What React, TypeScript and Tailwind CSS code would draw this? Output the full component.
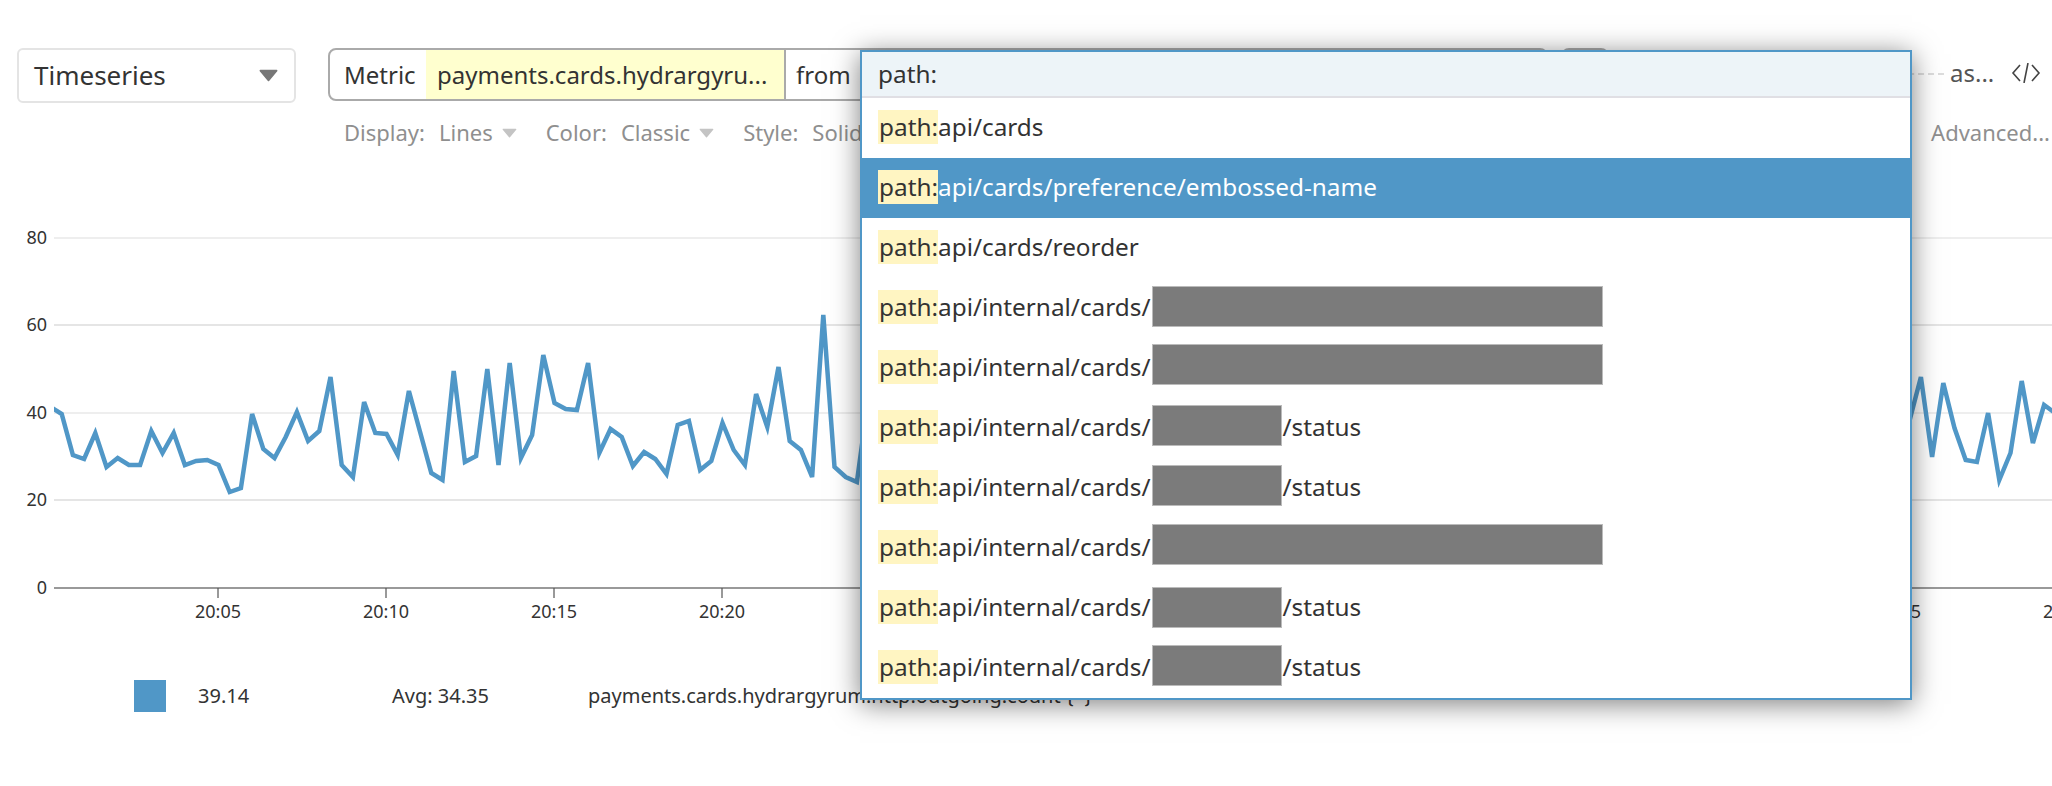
const X0 = 50.5;
const STEP = 11.2;

// y positions read off the reference, left part of the series
const leftSeries = [
  407, 414, 455, 459, 433, 467, 458, 465, 465, 431, 453, 433, 465, 461, 460, 465, 492, 488, 414, 449, 458, 437, 412,
  441, 431, 377, 465, 477, 402, 433, 434, 455, 391, 432, 473, 480, 371, 462, 456, 369, 465, 363, 458, 435, 355, 403,
  409, 410, 363, 453, 429, 437, 466, 452, 459, 474, 425, 421, 470, 461, 423, 450, 465, 394, 427, 367, 441, 450, 477,
  315, 467, 477, 482, 400,
];
const rightSeries = [420, 377, 457, 383, 428, 460, 462, 413, 480, 453, 381, 443, 405, 413];

const points = [
  ...leftSeries.map((y, i) => `${X0 + i * STEP},${y}`),
  ...rightSeries.map((y, i) => `${X0 + (166 + i) * STEP},${y}`),
].join(" ");

const yTicks = [
  { label: "80", y: 238, light: true },
  { label: "60", y: 325, light: false },
  { label: "40", y: 413, light: true },
  { label: "20", y: 500, light: false },
];
const xTicks = ["20:05", "20:10", "20:15", "20:20", "20:25", "20:30", "20:35", "20:40", "20:45", "20:50", "20:55", "21:00"];

const rows = [
  { text: "api/cards" },
  { text: "api/cards/preference/embossed-name", active: true },
  { text: "api/cards/reorder" },
  { text: "api/internal/cards/", hidden: 451, lift: 1 },
  { text: "api/internal/cards/", hidden: 451, lift: 5 },
  { text: "api/internal/cards/", hidden: 130, lift: 3, tail: "/status" },
  { text: "api/internal/cards/", hidden: 130, lift: 3, tail: "/status" },
  { text: "api/internal/cards/", hidden: 451, lift: 5 },
  { text: "api/internal/cards/", hidden: 130, lift: -1, tail: "/status" },
  { text: "api/internal/cards/", hidden: 130, lift: 3, tail: "/status" },
];

function Caret({ className }: { className: string }) {
  return (
    <svg viewBox="0 0 12 8" className={className} fill="currentColor" stroke="currentColor" strokeWidth="1" strokeLinejoin="round">
      <path d="M1 1h10L6 7z" />
    </svg>
  );
}

function Option({ label, value }: { label: string; value: string }) {
  return (
    <div className="flex items-center">
      <span>{label}</span>
      <span className="ml-[14px]">{value}</span>
      <Caret className="ml-[9px] w-[15px] h-[10px] text-[#c4c4c4]" />
    </div>
  );
}

function Chart() {
  return (
    <svg className="block w-[2052px] h-[420px]" viewBox="0 220 2052 420">
      <defs>
        <clipPath id="plot">
          <rect x="54" y="220" width="2000" height="368" />
        </clipPath>
      </defs>
      {yTicks.map((t) => (
        <g key={t.label}>
          <line x1="54" x2="2052" y1={t.y} y2={t.y} stroke={t.light ? "#eeeeee" : "#dddddd"} strokeWidth={t.light ? 2 : 1.5} />
          <text x="47" y={t.y + 6} textAnchor="end" fontSize="18" fill="#333">
            {t.label}
          </text>
        </g>
      ))}
      <text x="47" y="594" textAnchor="end" fontSize="18" fill="#333">
        0
      </text>
      <line x1="54" x2="2052" y1="588" y2="588" stroke="#777" strokeWidth="1.5" />
      {xTicks.map((label, i) => (
        <g key={label}>
          <line x1={218 + i * 168} x2={218 + i * 168} y1="588" y2="598" stroke="#555" strokeWidth="1.2" />
          <text x={218 + i * 168} y="618" textAnchor="middle" fontSize="18" fill="#333">
            {label}
          </text>
        </g>
      ))}
      <polyline points={points} fill="none" stroke="#5097c7" strokeWidth="4.5" strokeLinejoin="miter" clipPath="url(#plot)" />
    </svg>
  );
}

function Dropdown() {
  return (
    <div className="absolute left-[860px] top-[50px] w-[1052px] border-2 border-[#5097c7] bg-white text-[24.35px] text-[#333] shadow-[0_4px_26px_rgba(0,0,0,0.5)]">
      <div className="h-[46px] pl-[16px] pt-[1px] flex items-center bg-[#edf4f8] border-b-2 border-[#e0dfe4]">path:</div>
      {rows.map((r, i) => (
        <div key={i} className={`h-[60px] pl-[16px] pb-[2px] flex items-center ${r.active ? "bg-[#5097c7] text-white" : ""}`}>
          <span className="w-[60px] h-[34px] leading-[34px] pl-[1px] bg-[#fff5c2] text-[#333]">path:</span>
          <span>{r.text}</span>
          {r.hidden && (
            <span
              className="h-[41px] ml-[1px] bg-[#7b7b7b] border border-[#bbbbbb]"
              style={{ width: r.hidden, marginTop: -(r.lift ?? 0) }}
            />
          )}
          {r.tail && <span className="ml-[1px]">{r.tail}</span>}
        </div>
      ))}
    </div>
  );
}

export default function App() {
  return (
    <div className="relative w-[2052px] h-[786px] overflow-hidden bg-white font-['Noto_Sans',sans-serif] text-[#333]">
      <div className="flex items-start pt-[48px] pl-[17px]">
        <div className="w-[279px] h-[55px] px-[15px] flex items-center justify-between border-2 border-[#e4e4e4] rounded-[6px] text-[26px]">
          <span>Timeseries</span>
          <Caret className="w-[21px] h-[13px] text-[#777]" />
        </div>
        <div className="ml-[32px] w-[1220px] h-[53px] flex items-stretch border-2 border-[#aaaaaa] rounded-[8px] text-[24px] overflow-hidden">
          <div className="w-[96px] pl-[14px] flex items-center">Metric</div>
          <div className="w-[360px] pl-[11px] flex items-center bg-[#ffffcf] border-r-2 border-[#aaaaaa] whitespace-nowrap">payments.cards.hydrargyru...</div>
          <div className="pl-[10px] flex items-center">from</div>
        </div>
        <div className="ml-[13px] w-[48px] h-[30px] border-2 border-[#aaaaaa] rounded-[8px]" />
        <div className="w-[335px] mt-[25px] border-t-2 border-dashed border-[#dddddd]" />
        <span className="ml-[6px] text-[24px] text-[#555] leading-[50px]">as...</span>
        <svg viewBox="0 0 30 20" className="ml-[17px] mt-[15px] w-[30px] h-[20px]" fill="none" stroke="#444" strokeWidth="1.6">
          <path d="M9 2 2 10l7 8M17 0l-4 20M21 2l7 8-7 8" />
        </svg>
      </div>

      <div className="flex items-center justify-between mt-[16px] h-[27px] pl-[344px] pr-[2px] text-[22px] text-[#8f8f8f]">
        <div className="flex items-center gap-[29px]">
          <Option label="Display:" value="Lines" />
          <Option label="Color:" value="Classic" />
          <div className="flex items-center">
            <span>Style:</span>
            <span className="ml-[14px]">Solid</span>
          </div>
        </div>
        <span>Advanced...</span>
      </div>

      <div className="mt-[74px]">
        <Chart />
      </div>

      <div className="mt-[40px] pl-[134px] flex items-center text-[20px] whitespace-nowrap">
        <span className="w-[32px] h-[32px] bg-[#5097c7]" />
        <span className="ml-[32px] w-[194px]">39.14</span>
        <span className="w-[196px]">Avg: 34.35</span>
        <span>payments.cards.hydrargyrum.http.outgoing.count {"{*}"}</span>
      </div>

      <Dropdown />
    </div>
  );
}
